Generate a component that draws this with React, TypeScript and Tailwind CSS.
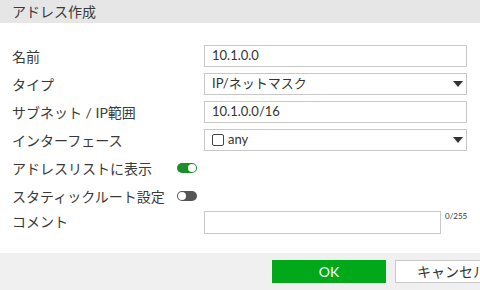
import { ReactNode } from "react";

const font = "font-['Lato','Noto_Sans_CJK_JP',sans-serif]";

function Row({ label, children }: { label: string; children: ReactNode }) {
  return (
    <div className="flex items-center h-[22px]">
      <div className="w-[192px] shrink-0 text-[14px] text-[#3a3a3a] whitespace-nowrap">{label}</div>
      {children}
    </div>
  );
}

function Field({ children, select }: { children?: ReactNode; select?: boolean }) {
  return (
    <div className="flex items-center w-[263px] h-[22px] border border-[#c8c8c8] bg-white pl-[7px] pr-[3px] text-[13px] text-[#333]">
      <div className="flex-1 flex items-center gap-[4px]">{children}</div>
      {select && <div className="w-0 h-0 border-x-[5px] border-x-transparent border-t-[6px] border-t-[#333]" />}
    </div>
  );
}

function Toggle({ on }: { on: boolean }) {
  return (
    <div
      className={`w-[20px] h-[10px] rounded-full flex items-center px-[1px] ${
        on ? "bg-[#1b8f2c] justify-end" : "bg-[#555] justify-start"
      }`}
    >
      <div className="w-[8px] h-[8px] rounded-full bg-white" />
    </div>
  );
}

export default function App() {
  return (
    <div className={`w-[480px] h-[290px] overflow-hidden bg-white flex flex-col ${font}`}>
      <div className="h-[23px] bg-[#e6e6e6] px-3 flex items-center text-[14px] text-[#3a3a3a]">
        アドレス作成
      </div>

      <div className="flex-1 flex flex-col gap-[6px] px-3 pt-[22px]">
        <Row label="名前">
          <Field>10.1.0.0</Field>
        </Row>
        <Row label="タイプ">
          <Field select>IP/ネットマスク</Field>
        </Row>
        <Row label="サブネット / IP範囲">
          <Field>10.1.0.0/16</Field>
        </Row>
        <Row label="インターフェース">
          <Field select>
            <span className="w-[12px] h-[12px] border-[1.5px] border-[#444] rounded-[2px]" />
            <span>any</span>
          </Field>
        </Row>
        <div className="flex items-center h-[22px] text-[14px] text-[#3a3a3a]">
          <div className="w-[165px] shrink-0">アドレスリストに表示</div>
          <Toggle on />
        </div>
        <div className="flex items-center h-[22px] text-[14px] text-[#3a3a3a]">
          <div className="w-[165px] shrink-0 whitespace-nowrap">スタティックルート設定</div>
          <Toggle on={false} />
        </div>
        <div className="flex items-start mt-[-2px]">
          <div className="w-[192px] shrink-0 text-[14px] text-[#3a3a3a]">コメント</div>
          <div className="w-[237px] h-[23px] border border-[#c8c8c8] bg-white" />
          <div className="text-[8px] text-[#333] ml-[4px] mt-[-1px]">0/255</div>
        </div>
      </div>

      <div className="h-[37px] bg-[#f0f0f0] flex items-center gap-[9px] pl-[272px]">
        <div className="w-[114px] h-[23px] shrink-0 bg-[#00a81a] text-white text-[14px] flex items-center justify-center">
          OK
        </div>
        <div className="w-[100px] h-[23px] shrink-0 bg-white border border-[#c8c8c8] text-[14px] text-[#333] flex items-center pl-[21px] whitespace-nowrap">
          キャンセル
        </div>
      </div>
    </div>
  );
}
